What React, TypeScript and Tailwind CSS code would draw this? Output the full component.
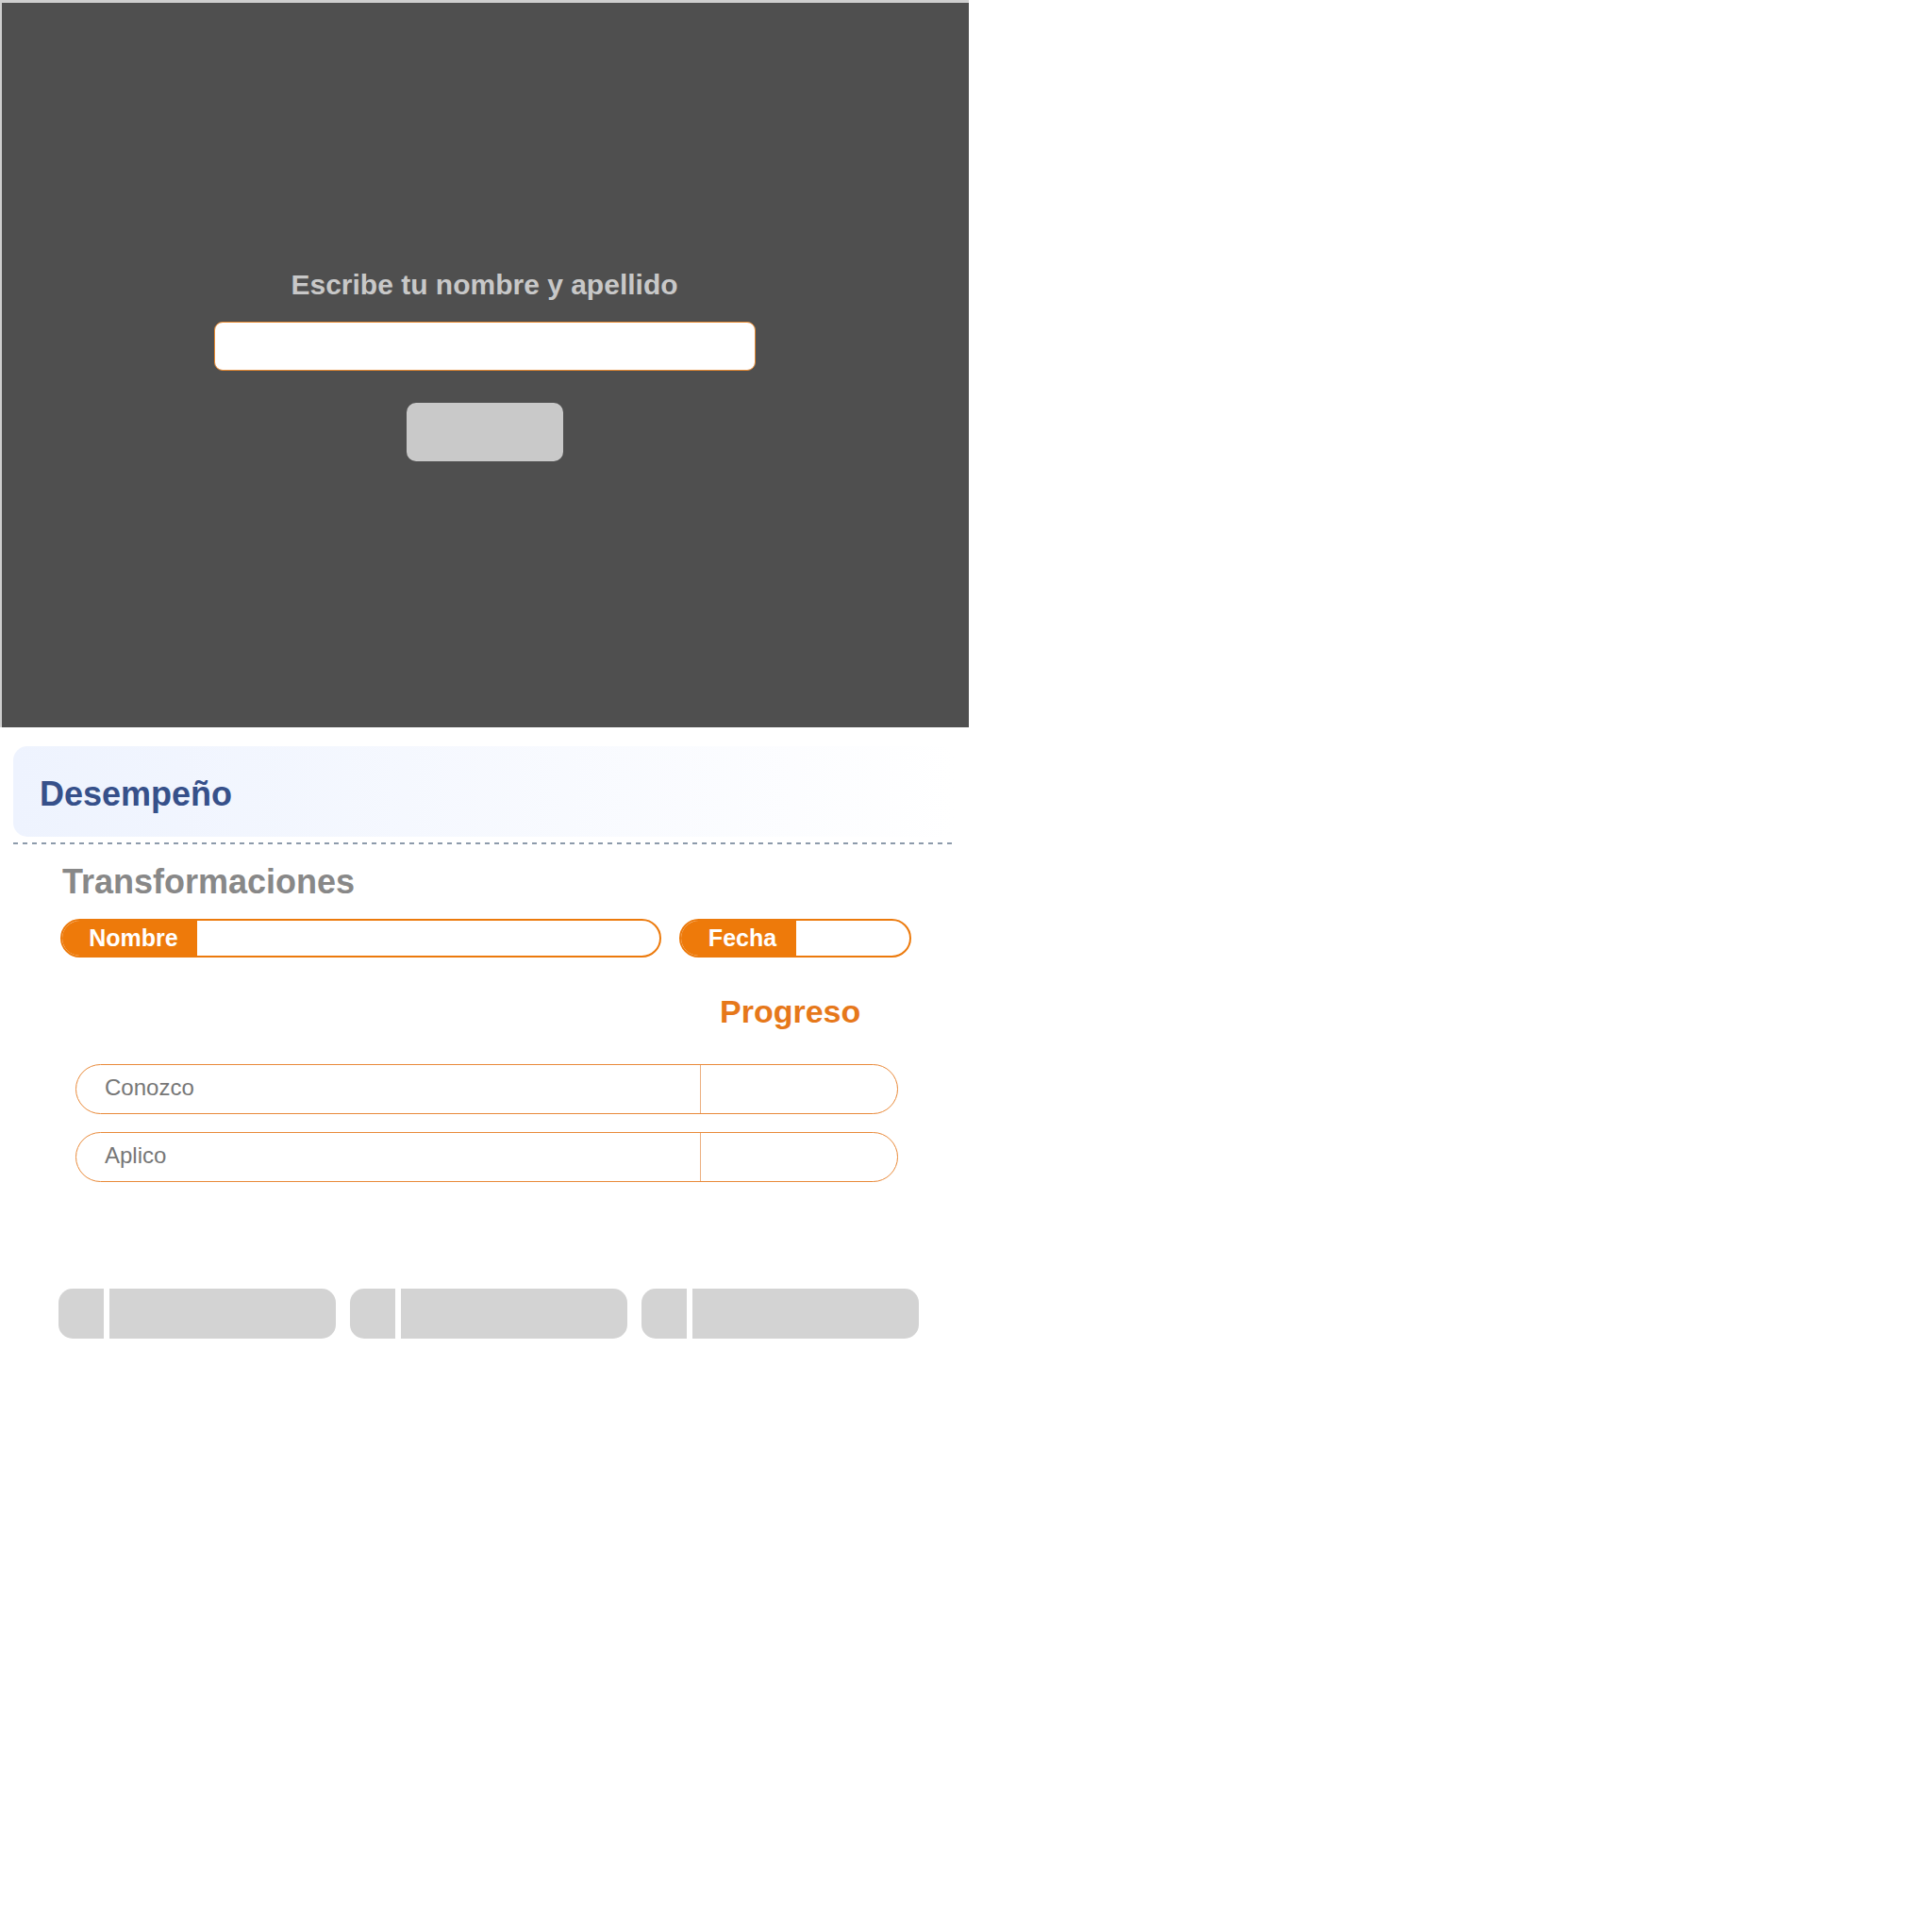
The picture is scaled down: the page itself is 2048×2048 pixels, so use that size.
const font = { fontFamily: '"Liberation Sans", Arial, sans-serif' };

const Pill = ({ label, width, labelWidth }: { label: string; width: string; labelWidth: string }) => (
  <div className={`flex h-[41px] ${width} overflow-hidden rounded-full border-2 border-[#ec7a0c] bg-white`}>
    <div className={`flex ${labelWidth} items-center justify-center bg-[#ee7a0a] pl-2 text-[25px] leading-none font-bold text-white`}>
      {label}
    </div>
    <div className="flex-1" />
  </div>
);

const SkillRow = ({ label }: { label: string }) => (
  <div className="flex h-[53px] w-[872px] overflow-hidden rounded-full border border-[#e98a3a] bg-white">
    <div className="flex w-[661px] items-center pb-[3px] pl-[30px] text-[24px] text-[#777777]">{label}</div>
    <div className="w-px bg-[#ecb080]" />
    <div className="flex-1" />
  </div>
);

const NavButton = () => (
  <div className="flex h-[53px] w-[294px] gap-[6px]">
    <div className="w-[48px] rounded-l-[15px] bg-[#d3d3d3]" />
    <div className="flex-1 rounded-r-[15px] bg-[#d3d3d3]" />
  </div>
);

export default function App() {
  return (
    <div className="min-h-screen bg-white" style={font}>
      <div className="w-[1027px] border-t-[3px] border-l-2 border-[#cfcfcf]">
        <div className="flex h-[768px] w-[1025px] flex-col items-center justify-center bg-[#4f4f4f] pr-[2px]">
          <div className="text-[30px] leading-[34px] font-bold text-[#c8c8c8]">Escribe tu nombre y apellido</div>
          <input
            type="text"
            className="mt-[22px] h-[52px] w-[574px] rounded-[9px] border border-[#e8892f] bg-white outline-none"
          />
          <button className="mt-[34px] h-[62px] w-[166px] rounded-[10px] bg-[#c9c9c9]" />
        </div>
      </div>

      <div className="mt-[20px] ml-[14px] w-[998px]">
        <div className="flex h-[96px] items-center rounded-[15px] bg-linear-to-r from-[#eef3fe] to-white pt-[5px] pl-[28px]">
          <h1 className="text-[36px] leading-[40px] font-bold text-[#36508a]">Desempeño</h1>
        </div>
        <div className="mt-[6px] h-[2px] bg-[repeating-linear-gradient(to_right,#8d9bab_0_5px,transparent_5px_10px)]" />

        <h2 className="mt-[20px] ml-[52px] text-[36px] leading-[40px] font-bold text-[#888888]">Transformaciones</h2>

        <div className="mt-[19px] ml-[50px] flex gap-[19px]">
          <Pill label="Nombre" width="w-[637px]" labelWidth="w-[143px]" />
          <Pill label="Fecha" width="w-[246px]" labelWidth="w-[122px]" />
        </div>

        <div className="mt-[37px] ml-[749px] text-[34px] leading-[40px] font-bold text-[#e6781a]">Progreso</div>

        <div className="mt-[36px] ml-[66px] flex flex-col gap-[19px]">
          <SkillRow label="Conozco" />
          <SkillRow label="Aplico" />
        </div>

        <div className="mt-[113px] ml-[48px] flex gap-[15px]">
          <NavButton />
          <NavButton />
          <NavButton />
        </div>
      </div>
    </div>
  );
}
